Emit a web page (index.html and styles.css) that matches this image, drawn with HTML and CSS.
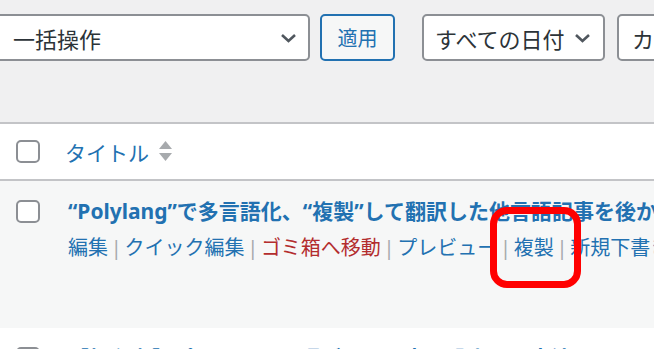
FILE: index.html
```html
<!DOCTYPE html>
<html lang="ja">
  <head>
    <meta charset="UTF-8" />
    <title>投稿一覧</title>
    <link rel="stylesheet" href="styles.css">
  </head>
  <body>
    <div class="tablenav">
      <div class="select select-bulk">
        <span>一括操作</span>
        <svg class="chevron" width="17" height="10" viewBox="0 0 17 10"><polyline points="2,2 8.5,8 15,2" /></svg>
      </div>
      <button class="apply">適用</button>
      <div class="select select-date">
        <span>すべての日付</span>
        <svg class="chevron" width="17" height="10" viewBox="0 0 17 10"><polyline points="2,2 8.5,8 15,2" /></svg>
      </div>
      <div class="select select-cat">
        <span>カテゴリー</span>
      </div>
    </div>

    <div class="posts">
      <div class="head-row">
        <span class="checkbox"></span>
        <span class="col-title">
          タイトル
          <svg class="sort" width="13" height="21" viewBox="0 0 13 21">
            <polygon points="6.5,0 13,8 0,8" />
            <polygon points="0,12 13,12 6.5,20" />
          </svg>
        </span>
      </div>

      <div class="post-row">
        <span class="checkbox"></span>
        <div class="post-body">
          <div class="row-title">“Polylang”で多言語化、“複製”して翻訳した他言語記事を後から編集する方法</div>
          <div class="row-actions">
            <a>編集</a> <span class="sep">|</span> <a>クイック編集</a> <span class="sep">|</span> <a class="trash">ゴミ箱へ移動</a> <span class="sep">|</span> <a>プレビュー</a> <span class="sep">|</span> <a>複製</a> <span class="sep">|</span> <a>新規下書き</a>
          </div>
        </div>
      </div>

      <div class="post-row alt">
        <span class="checkbox"></span>
        <div class="post-body">
          <div class="row-title">【初心者】ポリランで言語ごとに記事を設定する方法</div>
        </div>
      </div>
    </div>

    <!-- annotation -->
    <div class="mark"></div>
  </body>
</html>
```

FILE: styles.css
```css
body {
  margin: 0;
  width: 654px;
  height: 349px;
  overflow: hidden;
  position: relative;
  background-color: #f0f0f1;
  color: #2c3338;
  font-family: "Noto Sans", "Noto Sans CJK JP", sans-serif;
}

.tablenav {
  display: flex;
  align-items: center;
  margin-left: -4px;
  padding-top: 14px;
  height: 47px;
}

.select {
  box-sizing: border-box;
  flex-shrink: 0;
  display: flex;
  align-items: center;
  height: 47px;
  border: 2px solid #8c8f94;
  border-radius: 5px;
  background-color: #fff;
  font-size: 22px;
  white-space: nowrap;
  overflow: hidden;
}

.select-bulk {
  width: 314px;
  padding: 0 11px 0 15px;
  justify-content: space-between;
}

.select-date {
  width: 183px;
  margin-left: 27px;
  padding: 0 11px;
  gap: 9px;
}

.select-cat {
  width: 120px;
  margin-left: 12px;
  padding-left: 13px;
}

.chevron {
  flex-shrink: 0;
}

.chevron polyline {
  fill: none;
  stroke: #50575e;
  stroke-width: 2.6;
}

.apply {
  box-sizing: border-box;
  flex-shrink: 0;
  width: 75px;
  height: 47px;
  margin-left: 10px;
  padding: 0;
  border: 2px solid #2271b1;
  border-radius: 5px;
  background-color: #f6f7f7;
  color: #2271b1;
  font-family: "Noto Sans", "Noto Sans CJK JP", sans-serif;
  font-size: 20px;
}

.posts {
  margin-top: 61px;
  background-color: #fff;
  border-top: 2px solid #c3c4c7;
}

.head-row {
  display: flex;
  align-items: center;
  height: 55px;
  padding-left: 16px;
  border-bottom: 2px solid #c3c4c7;
}

.checkbox {
  box-sizing: border-box;
  flex-shrink: 0;
  width: 24px;
  height: 23px;
  border: 2px solid #8c8f94;
  border-radius: 5px;
  background-color: #fff;
}

.col-title {
  display: flex;
  align-items: center;
  gap: 10px;
  margin-left: 25px;
  color: #2271b1;
  font-size: 21px;
}

.sort polygon {
  fill: #a7aaad;
}

.post-row {
  box-sizing: border-box;
  display: flex;
  align-items: flex-start;
  height: 147px;
  padding: 19px 0 0 16px;
  background-color: #f6f7f7;
}

.post-row.alt {
  background-color: #fff;
}

.post-body {
  margin-left: 28px;
  margin-top: -2px;
  white-space: nowrap;
}

.row-title {
  color: #2271b1;
  font-size: 21px;
  font-weight: bold;
  line-height: 26px;
}

.row-actions {
  margin-top: 12px;
  color: #2271b1;
  font-size: 20px;
  line-height: 24px;
  word-spacing: -2.5px;
}

.row-actions .sep {
  color: #a7aaad;
}

.row-actions .trash {
  color: #b32d2e;
}

.mark {
  position: absolute;
  left: 490px;
  top: 207px;
  width: 91px;
  height: 81px;
  box-sizing: border-box;
  border: 7px solid #ff0000;
  border-radius: 17px;
}
```
